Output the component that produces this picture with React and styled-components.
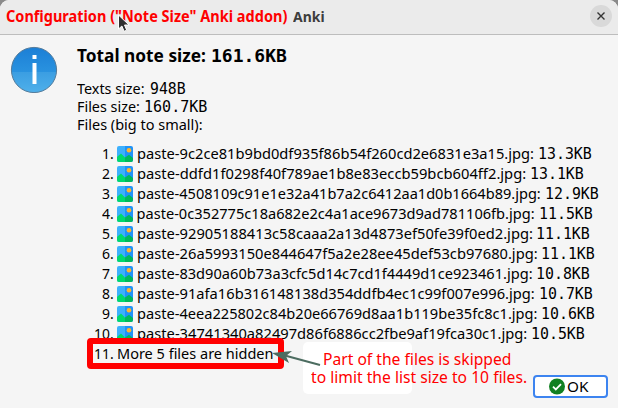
import React, { useLayoutEffect, useRef } from 'react';
import styled, { createGlobalStyle } from 'styled-components';

const Global = createGlobalStyle`
  * { box-sizing: border-box; }
  body { margin: 0; background: #8a8a8a; overflow: hidden; }
`;

const Dialog = styled.main`
  position: relative;
  width: 618px;
  height: 408px;
  display: flex;
  flex-direction: column;
  background: #f5f5f5;
  border-radius: 9px 9px 0 0;
  overflow: hidden;
  color: #000;
  font-family: "Noto Sans", "Open Sans", sans-serif;
`;

const TitleBar = styled.header`
  display: flex;
  align-items: center;
  height: 35px;
  padding: 0 6px 2px 6px;
  background: #ebebeb;
  border-bottom: 1px solid #bdbdbd;
`;

const CloseButton = styled.button`
  display: flex;
  align-items: center;
  justify-content: center;
  width: 22px;
  height: 22px;
  margin-left: auto;
  padding: 0;
  border: 0;
  border-radius: 50%;
  background: #d9d9d9;
`;

const Content = styled.section`
  display: flex;
  padding: 10px 0 0 10px;
`;

const InfoIcon = styled.svg`
  flex: none;
  width: 48px;
  height: 48px;
`;

const Details = styled.div`
  display: flex;
  flex-direction: column;
  padding-left: 19px;
`;

const Line = styled.div`
  display: flex;
  height: ${p => p.$h}px;
  align-items: center;
`;

const Summary = styled.div`
  padding-top: 13px;
`;

const List = styled.div`
  margin-top: 10px;
`;

const Row = styled.div`
  display: flex;
  align-items: center;
  height: 20px;
`;

const Marker = styled.span`
  display: flex;
  justify-content: flex-end;
  width: 36.5px;
  margin-right: 3.5px;
`;

const FileIcon = styled.svg`
  width: 16px;
  height: 16px;
  margin-right: 3.5px;
  flex: none;
`;

const Box = styled.span`
  display: block;
  flex: none;
  width: ${p => p.$w}px;
  margin-left: ${p => p.$ml || 0}px;
  height: 18px;
  margin-bottom: ${p => (p.$mono || p.$bold || p.$size ? 0 : 2)}px;
  white-space: pre;
  line-height: 18px;
  font-size: ${p => p.$size || 14.6}px;
  font-weight: ${p => (p.$bold ? 700 : 400)};
  color: ${p => p.$color || 'inherit'};
  font-family: ${p => (p.$mono ? '"DejaVu Sans Mono", monospace' : 'inherit')};
`;

const Stretch = styled.span`
  display: block;
  width: max-content;
  transform-origin: 0 50%;
`;

function Fit({ w, ml, size, bold, mono, color, children }) {
  const ref = useRef(null);
  useLayoutEffect(() => {
    const el = ref.current;
    el.style.transform = `scaleX(${w / el.offsetWidth})`;
  }, [w]);
  return (
    <Box $w={w} $ml={ml} $size={size} $bold={bold} $mono={mono} $color={color}>
      <Stretch ref={ref}>{children}</Stretch>
    </Box>
  );
}

const AppName = styled.div`
  padding-top: 1px;
`;

const Highlight = styled.div`
  position: absolute;
  left: 87px;
  top: 338px;
  width: 197px;
  height: 31px;
  border: 6px solid #f00;
  border-radius: 4px;
`;

const NoteCard = styled.div`
  position: absolute;
  left: 303px;
  top: 342px;
  width: 109px;
  height: 52px;
  border-radius: 5px;
  background: #fff;
`;

const Note = styled.div`
  position: absolute;
  left: 311px;
  top: 350px;
  display: flex;
  flex-direction: column;
`;

const Overlay = styled.svg`
  position: absolute;
  left: ${p => p.$x}px;
  top: ${p => p.$y}px;
`;

const OkButton = styled.button`
  position: absolute;
  left: 533px;
  top: 375px;
  width: 75px;
  height: 23px;
  display: flex;
  align-items: center;
  padding: 0 0 0 14px;
  border: 2px solid #3d84f0;
  border-radius: 4px;
  background: #fff;
  color: #000;
  font-family: inherit;
`;

const files = [
  ['9c2ce81b9bd0df935f86b54f260cd2e6831e3a15', '13.3KB', 397],
  ['ddfd1f0298f40f789ae1b8e83eccb59bcb604ff2', '13.1KB', 389.5],
  ['4508109c91e1e32a41b7a2c6412aa1d0b1664b89', '12.9KB', 404],
  ['0c352775c18a682e2c4a1ace9673d9ad781106fb', '11.5KB', 398],
  ['92905188413c58caaa2a13d4873ef50fe39f0ed2', '11.1KB', 395.5],
  ['26a5993150e844647f5a2e28ee45def53cb97680', '11.1KB', 400.5],
  ['83d90a60b73a3cfc5d14c7cd1f4449d1ce923461', '10.8KB', 395.5],
  ['91afa16b316148138d354ddfb4ec1c99f007e996', '10.7KB', 398],
  ['4eea225802c84b20e66769d8aa1b119be35fc8c1', '10.6KB', 400.5],
  ['34741340a82497d86f6886cc2fbe9af19fca30c1', '10.5KB', 390.5],
];

function PictureIcon() {
  return (
    <FileIcon viewBox="0 0 16 16">
      <path d="M2 0h7v16H2a2 2 0 0 1-2-2V2a2 2 0 0 1 2-2z" fill="#3db0fc" />
      <path d="M8 0h6a2 2 0 0 1 2 2v12a2 2 0 0 1-2 2H8z" fill="#2093f7" />
      <path d="M8 11.5 12 8.7l4 3.3v2a2 2 0 0 1-2 2H8z" fill="#00b85c" />
      <path d="M0 11 4 7.6 8 11.5V16H2a2 2 0 0 1-2-2z" fill="#00d86e" />
      <circle cx="12" cy="4.2" r="2.3" fill="#ffb52c" />
    </FileIcon>
  );
}

export default function App() {
  return (
    <>
      <Global />
      <Dialog>
        <TitleBar>
          <Fit w={281} size={15.8} bold color="#f00">Configuration ("Note Size" Anki addon)</Fit>
          <AppName><Fit w={32} ml={6} size={14.4} bold color="#3d3d3d">Anki</Fit></AppName>
          <CloseButton aria-label="Close">
            <svg width="8" height="8" viewBox="0 0 8 8">
              <path d="M.5.5l7 7m0-7l-7 7" stroke="#333" strokeWidth="1.4" />
            </svg>
          </CloseButton>
        </TitleBar>
        <Content>
          <InfoIcon viewBox="0 0 48 48">
            <defs>
              <linearGradient id="blue" x2="0" y2="1">
                <stop offset="0" stopColor="#1c7fd6" />
                <stop offset=".54" stopColor="#2992df" />
                <stop offset=".55" stopColor="#3b9ee2" />
                <stop offset="1" stopColor="#4fb0ea" />
              </linearGradient>
            </defs>
            <circle cx="24" cy="25" r="22.6" fill="url(#blue)" stroke="#557b99" />
            <path d="M22.5 10h4v4h-4zM22.5 18h4v21h-4z" fill="#fff" />
          </InfoIcon>
          <Details>
            <Line $h={22}>
              <Fit w={129} size={17.3} bold>Total note size:</Fit>
              <Fit w={76} ml={5} size={17.3} bold mono>161.6KB</Fit>
            </Line>
            <Summary>
              <Line $h={18}><Fit w={68}>Texts size:</Fit><Fit w={36} ml={5} size={16} mono>948B</Fit></Line>
              <Line $h={18}><Fit w={63}>Files size:</Fit><Fit w={63} ml={4} size={16} mono>160.7KB</Fit></Line>
              <Line $h={18}><Fit w={126}>Files (big to small):</Fit></Line>
            </Summary>
            <List>
              {files.map(([hash, size, w], i) => (
                <Row key={hash}>
                  <Marker><Fit w={i === 9 ? 20 : 11.5}>{i + 1}.</Fit></Marker>
                  <PictureIcon />
                  <Fit w={w}>{`paste-${hash}.jpg:`}</Fit>
                  <Fit w={54} ml={4} size={16} mono>{size}</Fit>
                </Row>
              ))}
              <Row>
                <Marker><Fit w={20}>11.</Fit></Marker>
                <Fit w={156}>More 5 files are hidden</Fit>
              </Row>
            </List>
          </Details>
        </Content>
        <NoteCard />
        <Note>
          <Fit w={188} ml={12} size={15.8} color="#f00">Part of the files is skipped</Fit>
          <Fit w={216} size={15.8} color="#f00">to limit the list size to 10 files.</Fit>
        </Note>
        <Highlight />
        <Overlay $x={271} $y={348} width="52" height="20" viewBox="0 0 52 20">
          <path d="M12 7 49 17" stroke="#4c6c60" strokeWidth="2" />
          <path d="M1 5 21 3 15 8 18 15z" fill="#4c6c60" />
        </Overlay>
        <OkButton>
          <svg width="17" height="17" viewBox="0 0 17 17">
            <circle cx="8" cy="8.5" r="8" fill="#118022" />
            <path d="M4 8.7 6.8 11.4 12 6.2" fill="none" stroke="#fff" strokeWidth="1.8" />
          </svg>
          <Fit w={21} ml={1}>OK</Fit>
        </OkButton>
        <Overlay $x={117} $y={13} width="14" height="21" viewBox="0 0 14 21">
          <path d="M1.5 2v14l3.4-3 2.2 5.3 2.6-1.1-2.2-5.2H12z" fill="#303030" stroke="#fff" strokeWidth="1" />
        </Overlay>
      </Dialog>
    </>
  );
}
